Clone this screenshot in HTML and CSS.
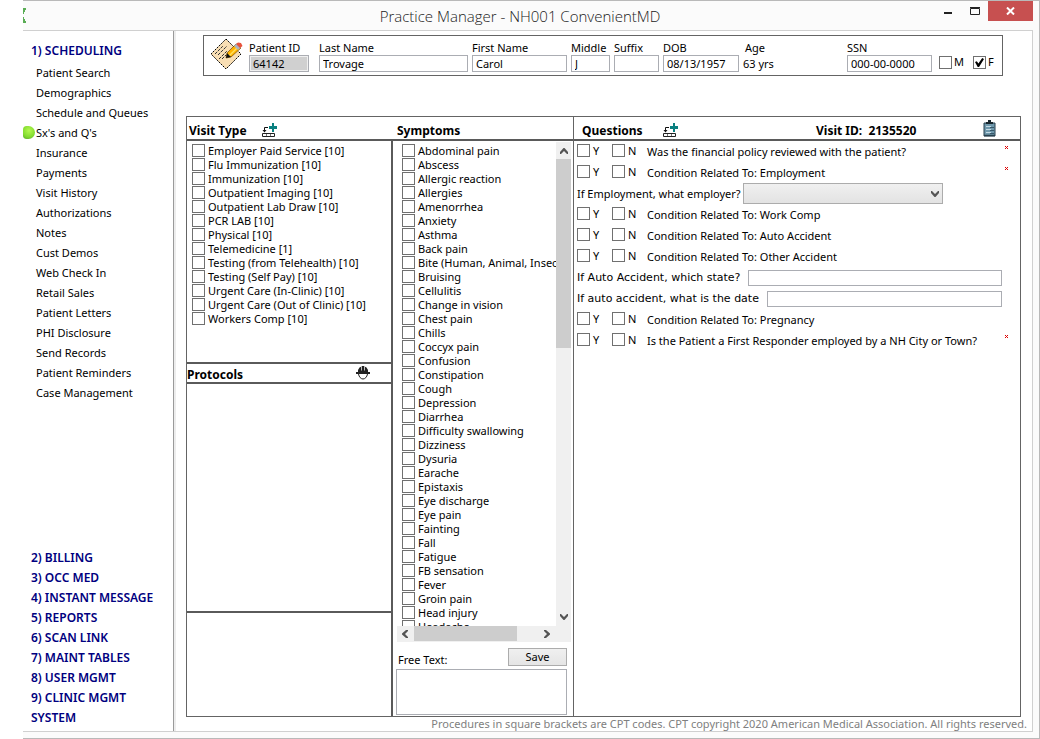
FILE: index.html
```html
<!DOCTYPE html>
<html lang="en">
<head>
<meta charset="utf-8">
<title>Practice Manager - NH001 ConvenientMD</title>
<link rel="stylesheet" href="styles.css">
</head>
<body>
<svg class="defs" aria-hidden="true">
  <symbol id="add-row" viewBox="0 0 16 15">
    <path d="M11 0h2v3h3v3h-3v3h-2V6H8V3h3z" fill="#0a8080"/>
    <path d="M7 4.500H3.500V8" fill="none" stroke="#111"/><path d="M1.500 7h4L3.500 9.500z" fill="#111"/>
    <path d="M1.500 10.500h12v3h-12z" fill="#fff" stroke="#222"/><path d="M5.500 11v2M9.500 11v2" stroke="#777"/>
  </symbol>
  <symbol id="req" viewBox="0 0 3 3"><path d="M0 0h1v1H0zM2 0h1v1H2zM1 1h1v1H1zM0 2h1v1H0zM2 2h1v1H2z" fill="#e00000"/></symbol>
  <symbol id="chev" viewBox="0 0 8 6"><path d="M0 0h1l3 3 3-3h1v2L4.500 6h-1L0 2z" fill="#555"/></symbol>
</svg>
<div class="window">
  <header class="titlebar">
    <svg class="app-icon" viewBox="0 0 3 15"><path d="M0 0h3v2H2v2H1v2H0zM0 9h1v2h1v2h1v2H0z" fill="#5aad55"/></svg>
    <h1>Practice Manager - NH001 ConvenientMD</h1>
    <div class="controls">
      <button class="ctl" aria-label="Minimize"><svg width="10" height="10"><path d="M1 6h8v2H1z" fill="#222"/></svg></button>
      <button class="ctl" aria-label="Maximize"><svg width="10" height="9"><path d="M.5 1.500h9v6h-9zM0 .5h10" fill="none" stroke="#222"/></svg></button>
      <button class="ctl close" aria-label="Close"><svg width="9" height="8"><path d="M1 .5l7 7M8 .5l-7 7" stroke="#fff" stroke-width="2"/></svg></button>
    </div>
  </header>
  <div class="client">
    <nav class="sidebar">
      <a class="group first" href="#">1) SCHEDULING</a>
      <ul class="items">
        <li><a href="#">Patient Search</a></li>
        <li><a href="#">Demographics</a></li>
        <li><a href="#">Schedule and Queues</a></li>
        <li class="current"><a href="#">Sx's and Q's</a></li>
        <li><a href="#">Insurance</a></li>
        <li><a href="#">Payments</a></li>
        <li><a href="#">Visit History</a></li>
        <li><a href="#">Authorizations</a></li>
        <li><a href="#">Notes</a></li>
        <li><a href="#">Cust Demos</a></li>
        <li><a href="#">Web Check In</a></li>
        <li><a href="#">Retail Sales</a></li>
        <li><a href="#">Patient Letters</a></li>
        <li><a href="#">PHI Disclosure</a></li>
        <li><a href="#">Send Records</a></li>
        <li><a href="#">Patient Reminders</a></li>
        <li><a href="#">Case Management</a></li>
      </ul>
      <div class="groups">
        <a class="group" href="#">2) BILLING</a>
        <a class="group" href="#">3) OCC MED</a>
        <a class="group" href="#">4) INSTANT MESSAGE</a>
        <a class="group" href="#">5) REPORTS</a>
        <a class="group" href="#">6) SCAN LINK</a>
        <a class="group" href="#">7) MAINT TABLES</a>
        <a class="group" href="#">8) USER MGMT</a>
        <a class="group" href="#">9) CLINIC MGMT</a>
        <a class="group" href="#">SYSTEM</a>
      </div>
    </nav>
    <main class="main">
      <section class="patient">
        <svg class="note-icon" viewBox="0 0 34 34">
          <path d="M17 2L32 17L17 32L2 17z" fill="#f8deb4" stroke="#000" stroke-dasharray="2 1"/>
          <path d="M6 17l8-8M9 18l9-9M10 22l8-8M13 22l4-4" stroke="#333" stroke-dasharray="3 1"/>
          <path d="M17 21l1-5L27 7l5 4L22 20z" fill="#ffb400" stroke="#5a3000" stroke-width=".6"/>
          <path d="M20 19l9-9" stroke="#ffe060" stroke-width="1.500"/>
          <path d="M17 21l1-5 4 4z" fill="#111"/>
          <path d="M25 9l3-3 4 4-3 3z" fill="#aab4c4"/>
          <path d="M27 7l2-1.500 3 .5 1.500 3-2.500 2z" fill="#e8523c"/>
        </svg>
        <div class="field id"><label for="pid">Patient ID</label><input id="pid" value="64142" readonly></div>
        <div class="field last"><label for="ln">Last Name</label><input id="ln" value="Trovage"></div>
        <div class="field fname"><label for="fn">First Name</label><input id="fn" value="Carol"></div>
        <div class="field mid"><label for="mn">Middle</label><input id="mn" value="J"></div>
        <div class="field suf"><label for="sf">Suffix</label><input id="sf"></div>
        <div class="field dob"><label for="dob">DOB</label><input id="dob" value="08/13/1957"></div>
        <div class="field age"><span class="cap">Age</span><span class="val">63 yrs</span></div>
        <div class="field ssn"><label for="ssn">SSN</label><input id="ssn" value="000-00-0000"></div>
        <div class="sex"><label><input type="checkbox">M</label><label><input type="checkbox" checked>F</label></div>
      </section>
      <section class="panel">
        <div class="left">
          <div class="head">
            <h2 class="vt">Visit Type</h2><svg class="add"><use href="#add-row"/></svg><h2 class="sym">Symptoms</h2>
          </div>
          <div class="cols">
            <div class="visit">
              <div class="list types">
                <label><input type="checkbox">Employer Paid Service [10]</label>
                <label><input type="checkbox">Flu Immunization [10]</label>
                <label><input type="checkbox">Immunization [10]</label>
                <label><input type="checkbox">Outpatient Imaging [10]</label>
                <label><input type="checkbox">Outpatient Lab Draw [10]</label>
                <label><input type="checkbox">PCR LAB [10]</label>
                <label><input type="checkbox">Physical [10]</label>
                <label><input type="checkbox">Telemedicine [1]</label>
                <label><input type="checkbox">Testing (from Telehealth) [10]</label>
                <label><input type="checkbox">Testing (Self Pay) [10]</label>
                <label><input type="checkbox">Urgent Care (In-Clinic) [10]</label>
                <label><input type="checkbox">Urgent Care (Out of Clinic) [10]</label>
                <label><input type="checkbox">Workers Comp [10]</label>
              </div>
              <div class="prot-head"><h2>Protocols</h2>
                <svg class="helmet" viewBox="0 0 14 14"><path d="M2 6V4l1.500-2.500L5 .8V4.500h.7V0h2.600v4.500H9V.8l1.500.7L12 4v2z" fill="#222"/><path d="M0 6h14v2H0z" fill="#222"/><path d="M2.500 8c.5 3 2.500 5 4.500 5s4-2 4.500-5" fill="none" stroke="#222"/></svg>
              </div>
              <div class="prot-body"></div>
              <div class="notes"></div>
            </div>
            <div class="symptoms">
              <div class="scroll">
                <div class="view"><div class="list">
                  <label><input type="checkbox">Abdominal pain</label>
                  <label><input type="checkbox">Abscess</label>
                  <label><input type="checkbox">Allergic reaction</label>
                  <label><input type="checkbox">Allergies</label>
                  <label><input type="checkbox">Amenorrhea</label>
                  <label><input type="checkbox">Anxiety</label>
                  <label><input type="checkbox">Asthma</label>
                  <label><input type="checkbox">Back pain</label>
                  <label><input type="checkbox">Bite (Human, Animal, Insect)</label>
                  <label><input type="checkbox">Bruising</label>
                  <label><input type="checkbox">Cellulitis</label>
                  <label><input type="checkbox">Change in vision</label>
                  <label><input type="checkbox">Chest pain</label>
                  <label><input type="checkbox">Chills</label>
                  <label><input type="checkbox">Coccyx pain</label>
                  <label><input type="checkbox">Confusion</label>
                  <label><input type="checkbox">Constipation</label>
                  <label><input type="checkbox">Cough</label>
                  <label><input type="checkbox">Depression</label>
                  <label><input type="checkbox">Diarrhea</label>
                  <label><input type="checkbox">Difficulty swallowing</label>
                  <label><input type="checkbox">Dizziness</label>
                  <label><input type="checkbox">Dysuria</label>
                  <label><input type="checkbox">Earache</label>
                  <label><input type="checkbox">Epistaxis</label>
                  <label><input type="checkbox">Eye discharge</label>
                  <label><input type="checkbox">Eye pain</label>
                  <label><input type="checkbox">Fainting</label>
                  <label><input type="checkbox">Fall</label>
                  <label><input type="checkbox">Fatigue</label>
                  <label><input type="checkbox">FB sensation</label>
                  <label><input type="checkbox">Fever</label>
                  <label><input type="checkbox">Groin pain</label>
                  <label><input type="checkbox">Head injury</label>
                  <label><input type="checkbox">Headache</label>
                </div></div>
                <div class="vbar"><svg class="chev up"><use href="#chev"/></svg><div class="vtrack"><div class="vthumb"></div></div><svg class="chev"><use href="#chev"/></svg></div>
                <div class="hbar"><svg class="chev lt"><use href="#chev"/></svg><div class="htrack"><div class="hthumb"></div></div><svg class="chev rt"><use href="#chev"/></svg></div>
              </div>
              <div class="free">
                <div class="free-head"><label for="free">Free Text:</label><button class="save">Save</button></div>
                <textarea id="free"></textarea>
              </div>
            </div>
          </div>
        </div>
        <div class="right">
          <div class="head">
            <h2 class="qh">Questions</h2><svg class="add"><use href="#add-row"/></svg>
            <h2 class="vid">Visit ID:&nbsp; 2135520</h2>
            <svg class="clip" viewBox="0 0 13 17"><path d="M1 3h11v13H1z" fill="#6f98ac" stroke="#28404e"/><path d="M1 15.500h11" stroke="#28404e" stroke-width="1.500"/><path d="M3 4V2h2V0h3v2h2v2z" fill="#16242c"/><path d="M3 6.500h5M3 9.500h5M3 12.500h5" stroke="#c4dae4"/><path d="M7 7.500h4M7 10.500h4M7 13.500h4" stroke="#37586a"/></svg>
          </div>
          <div class="qs">
            <div class="q"><label><input type="checkbox">Y</label><label><input type="checkbox">N</label><span>Was the financial policy reviewed with the patient?</span><svg class="req"><use href="#req"/></svg></div>
            <div class="q"><label><input type="checkbox">Y</label><label><input type="checkbox">N</label><span>Condition Related To: Employment</span><svg class="req"><use href="#req"/></svg></div>
            <div class="q"><label for="emp">If Employment, what employer?</label><span class="combo"><select id="emp"><option></option></select><svg class="chev"><use href="#chev"/></svg></span></div>
            <div class="q"><label><input type="checkbox">Y</label><label><input type="checkbox">N</label><span>Condition Related To: Work Comp</span></div>
            <div class="q"><label><input type="checkbox">Y</label><label><input type="checkbox">N</label><span>Condition Related To: Auto Accident</span></div>
            <div class="q"><label><input type="checkbox">Y</label><label><input type="checkbox">N</label><span>Condition Related To: Other Accident</span></div>
            <div class="q wide"><label class="state" for="state">If Auto Accident, which state?</label><input id="state"></div>
            <div class="q wide"><label class="date" for="date">If auto accident, what is the date</label><input id="date"></div>
            <div class="q"><label><input type="checkbox">Y</label><label><input type="checkbox">N</label><span>Condition Related To: Pregnancy</span></div>
            <div class="q"><label><input type="checkbox">Y</label><label><input type="checkbox">N</label><span>Is the Patient a First Responder employed by a NH City or Town?</span><svg class="req"><use href="#req"/></svg></div>
          </div>
        </div>
      </section>
      <footer class="foot">Procedures in square brackets are CPT codes. CPT copyright 2020 American Medical Association. All rights reserved.</footer>
    </main>
  </div>
</div>
</body>
</html>
```
FILE: styles.css
```css
* { box-sizing: border-box; }
body { margin: 0; background: #fff; color: #000; font: 11px/14px "Noto Sans", "Open Sans", sans-serif; }
h1, h2, ul { margin: 0; padding: 0; }
h2 { font-size: 12px; line-height: 16px; font-weight: 700; white-space: nowrap; }
a { color: inherit; text-decoration: none; }
ul { list-style: none; }
input, select, textarea, button { font: inherit; color: inherit; margin: 0; border-radius: 0; }
input, textarea { background: #fff; border: 1px solid #abadb3; padding: 0 3px; min-width: 0; }
svg { display: block; flex: none; }
label { white-space: nowrap; }
.defs { position: absolute; width: 0; height: 0; }

input[type="checkbox"] { appearance: none; flex: none; width: 13px; height: 13px; padding: 0; border: 1px solid #707070; display: grid; place-items: center; }
input[type="checkbox"]:checked::after { content: ""; width: 9px; height: 9px; background: #000; clip-path: polygon(0 45%, 20% 35%, 38% 62%, 80% 0, 100% 10%, 45% 100%, 30% 100%); }

.window { margin-left: 23px; height: 100vh; min-height: 739px; display: flex; flex-direction: column; background: #fbfbfb; border: 1px solid #b9b9b9; border-left: 0; }
.titlebar { display: flex; align-items: center; height: 29px; }
.app-icon { width: 3px; height: 15px; }
.titlebar h1 { flex: 1; text-align: center; font: 300 15px/20px "Open Sans", "Noto Sans", sans-serif; color: #222; padding-left: 80px; }
.controls { display: flex; align-self: flex-start; height: 20px; margin-right: 6px; }
.ctl { width: 27px; height: 20px; padding: 0; border: 0; background: none; display: grid; place-items: center; }
.ctl.close { width: 45px; background: #c75050; }

.client { flex: 1; display: flex; min-height: 0; margin: 0 6px 6px 0; background: #fff; border: 1px solid #d0d0d0; border-left: 0; }
.sidebar { width: 153px; flex: none; display: flex; flex-direction: column; padding: 10px 0 3px 8px; border-right: 2px solid #ededed; box-shadow: inset -1px 0 #9a9a9a; }
.sidebar a { display: block; line-height: 20px; }
.group { font-size: 12px; font-weight: 600; color: #000080; }
.items { padding: 2px 0 0 5px; }
.current { position: relative; }
.current::before { content: ""; position: absolute; left: -13px; top: 3px; width: 12px; height: 13px; border-radius: 4px 7px 7px 4px; background: radial-gradient(circle at 50% 35%, #b4f850, #84dc30 60%, #58a828); }
.groups { margin-top: auto; }

.main { flex: 1; min-width: 0; display: flex; flex-direction: column; }
.patient { margin: 4px 29px 0 27px; height: 41px; display: flex; gap: 4px; border: 1px solid #646464; padding-left: 5px; padding-top: 5px; }
.note-icon { width: 34px; height: 34px; margin-top: -4px; margin-right: 2px; }
.field { display: flex; flex-direction: column; }
.field input { width: 100%; height: 17px; }
.id { width: 60px; margin-right: 6px; }
.id input { background: #d0d0d0; box-shadow: inset 0 0 0 1px #f0f0f0; }
.last { flex: 149 1 0; }
.fname { width: 95px; }
.mid { width: 39px; }
.suf { width: 45px; }
.dob { width: 76px; }
.age { width: 100px; }
.cap { padding-left: 2px; }
.val { line-height: 17px; }
.ssn { width: 85px; }
.sex { display: flex; width: 66px; padding-left: 3px; padding-top: 14px; gap: 8px; }
.sex label { display: flex; align-items: flex-end; gap: 2px; height: 14px; width: 26px; }

.panel { flex: 1; min-height: 0; margin: 40px 11px 0 10px; display: grid; grid-template-columns: 387px 1fr; border: 1px solid #646464; }
.left, .right { display: flex; flex-direction: column; min-height: 0; min-width: 0; }
.left { border-right: 1px solid #646464; }
.head { display: flex; align-items: center; height: 24px; padding-top: 5px; border-bottom: 2px solid #5a5a5a; }
.add { width: 16px; height: 15px; }
.left .head { padding-left: 2px; }
.vt { width: 72px; }
.sym { margin-left: 120px; }
.cols { flex: 1; display: grid; grid-template-columns: 206px 1fr; min-height: 0; }
.visit { display: flex; flex-direction: column; min-height: 0; border-right: 2px solid #5a5a5a; }
.list label { display: flex; gap: 3px; height: 14px; }
.types { flex: 221 1 0; padding: 3px 0 0 5px; }
.prot-head { display: flex; justify-content: space-between; align-items: center; height: 22px; padding-right: 21px; border: solid #5a5a5a; border-width: 2px 0; }
.prot-head h2 { padding-top: 3px; }
.helmet { width: 14px; height: 14px; }
.prot-body { flex: 230 1 0; border-bottom: 2px solid #5a5a5a; }
.notes { flex: 104 1 0; }

.symptoms { display: flex; flex-direction: column; min-height: 0; padding: 1px 0 1px 3px; }
.scroll { flex: 1; min-height: 0; margin: 0 2px 0 1px; display: grid; grid-template: 1fr 16px / 1fr 15px; }
.view { overflow: hidden; min-height: 0; min-width: 0; padding: 2px 0 0 5px; }
.vbar { background: #f0f0f0; display: flex; flex-direction: column; align-items: center; padding: 6px 0; min-height: 0; }
.vtrack { flex: 1; width: 100%; margin: 5px 0; }
.vthumb { height: 42%; background: #cdcdcd; }
.hbar { grid-column: 1 / 3; background: #f0f0f0; display: flex; align-items: center; padding: 0 20px 0 4px; }
.htrack { flex: 1; height: 100%; margin: 0 4px 0 5px; }
.hthumb { width: 82%; height: 15px; background: #cdcdcd; }
.chev { width: 8px; height: 6px; }
.up { transform: rotate(180deg); }
.lt { transform: rotate(90deg); }
.rt { transform: rotate(-90deg); }
.free { padding: 6px 6px 0 0; display: flex; flex-direction: column; }
.free-head { display: flex; justify-content: space-between; padding-left: 2px; margin-bottom: 3px; }
.free-head label { padding-top: 6px; line-height: 12px; }
.save { width: 59px; height: 18px; padding: 0; line-height: 14px; border: 1px solid #acacac; background: linear-gradient(#f0f0f0, #e5e5e5); }
textarea { display: block; width: 100%; height: 46px; resize: none; }

.right .head { padding-left: 8px; padding-right: 24px; }
.qh { width: 80px; }
.vid { margin-left: 138px; }
.clip { width: 13px; height: 17px; margin-left: auto; margin-bottom: 5px; }
.qs { padding-left: 3px; }
.q { display: flex; align-items: center; height: 21px; padding-right: 12px; }
.q label:has(input) { display: flex; gap: 3px; width: 35px; height: 15px; }
.req { width: 3px; height: 3px; margin-left: auto; margin-bottom: 8px; }
.combo { position: relative; margin-left: 2px; width: 200px; }
.combo select { appearance: none; display: block; width: 100%; height: 21px; border: 1px solid #acacac; background: linear-gradient(#f0f0f0, #e3e3e3); }
.combo .chev { position: absolute; right: 4px; top: 8px; pointer-events: none; }
.wide { font-family: "DejaVu Sans", sans-serif; padding-right: 18px; }
.wide input { flex: 1; height: 16px; margin-left: 2px; }
.state { width: 169px; }
.date { width: 188px; }

.foot { height: 14px; padding-right: 5px; text-align: right; color: #808080; white-space: nowrap; }
```
